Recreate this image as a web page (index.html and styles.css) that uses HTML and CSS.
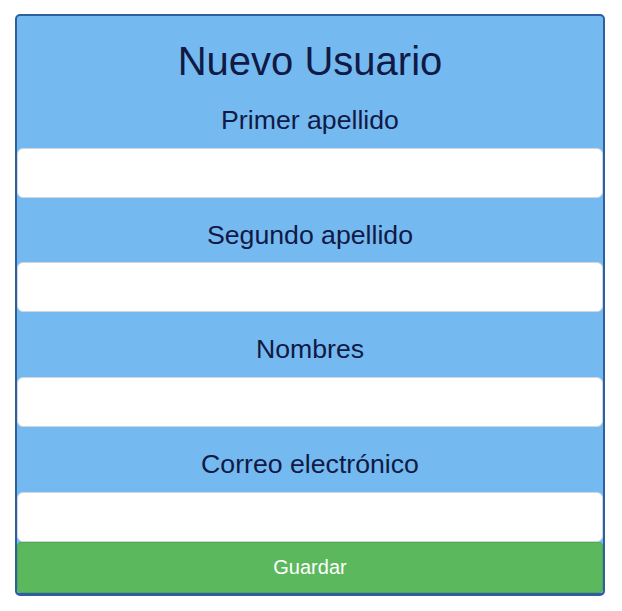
FILE: index.html
```html
<!DOCTYPE html>
<html lang="es">
<head>
<meta charset="utf-8">
<title>Nuevo Usuario</title>
<link rel="stylesheet" href="styles.css">
</head>
<body>
<form class="card">
  <h1 class="title">Nuevo Usuario</h1>
  <label class="label" for="ap1">Primer apellido</label>
  <input class="field" id="ap1" type="text">
  <label class="label" for="ap2">Segundo apellido</label>
  <input class="field" id="ap2" type="text">
  <label class="label" for="nom">Nombres</label>
  <input class="field" id="nom" type="text">
  <label class="label" for="mail">Correo electrónico</label>
  <input class="field" id="mail" type="email">
  <button class="btn" type="button">Guardar</button>
</form>
</body>
</html>
```

FILE: styles.css
```css
html, body {
  margin: 0;
  padding: 0;
  background: #ffffff;
}
body {
  padding: 14px 0 0 15px;
  font-family: "Liberation Sans", Arial, sans-serif;
}
.card {
  box-sizing: border-box;
  width: 590px;
  display: flex;
  flex-direction: column;
  background: #75b9f1;
  border: 2px solid #2e5f9f;
  border-bottom-width: 3px;
  border-radius: 5px;
  margin: 0;
  padding: 0;
}
.title {
  margin: 22px 0 -1px;
  font-size: 40px;
  font-weight: normal;
  line-height: 46px;
  text-align: center;
  color: #0f1a45;
}
.label {
  display: block;
  padding: 22px 0 11.67px;
  font-size: 26.67px;
  line-height: 31px;
  text-align: center;
  color: #0f1a45;
}
.field {
  box-sizing: border-box;
  display: block;
  width: 100%;
  height: 50px;
  margin: 0;
  border: 1px solid #cfd6df;
  border-radius: 6px;
  background: #ffffff;
  font-size: 16px;
  outline: none;
}
.btn {
  box-sizing: border-box;
  display: block;
  width: 100%;
  height: 51px;
  margin: 0;
  border: 1px solid #52a852;
  border-radius: 4px;
  background: #5cb85c;
  color: #ffffff;
  font-family: "Liberation Sans", Arial, sans-serif;
  font-size: 20px;
  cursor: pointer;
}
```
